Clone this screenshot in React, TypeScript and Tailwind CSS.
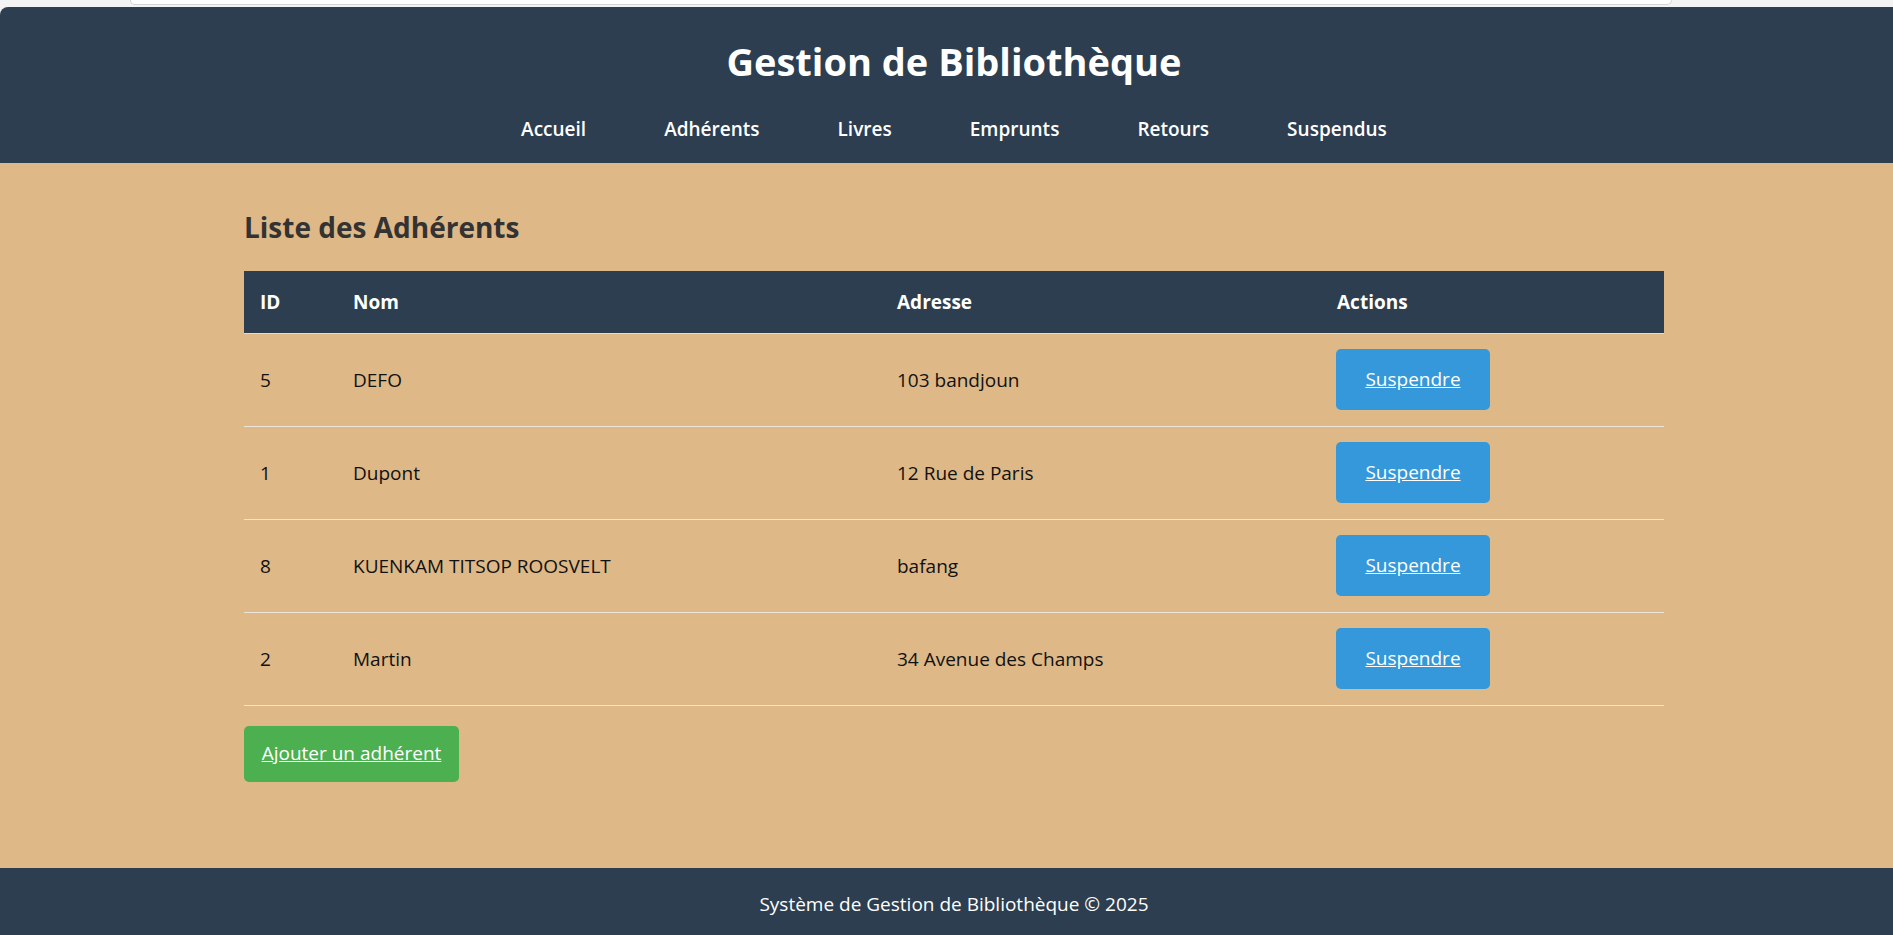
import React from "react";

const adherents = [
  { id: 5, nom: "DEFO", adresse: "103 bandjoun" },
  { id: 1, nom: "Dupont", adresse: "12 Rue de Paris" },
  { id: 8, nom: "KUENKAM TITSOP ROOSVELT", adresse: "bafang" },
  { id: 2, nom: "Martin", adresse: "34 Avenue des Champs" },
];

const navigation = ["Accueil", "Adhérents", "Livres", "Emprunts", "Retours", "Suspendus"];

export default function App() {
  return (
    <div className="min-h-[935px] flex flex-col bg-[#f3f3f3] font-['Open_Sans',sans-serif]">
      <div className="h-[7px] flex pl-[130px]">
        <div className="w-[1542px] h-[5px] bg-white border-b border-x border-[#d4d4d4] rounded-b-[6px]" />
      </div>

      <header className="bg-[#2c3e50] rounded-tl-[8px] text-white pl-[15px] pt-[30px] pb-[20px]">
        <h1 className="text-center text-[38px] leading-[48px] font-bold">Gestion de Bibliothèque</h1>
        <nav className="mt-[30px] flex justify-center gap-[78px] text-[19px] leading-[28px] font-semibold">
          {navigation.map((item) => (
            <a key={item} href="#" className="text-white">
              {item}
            </a>
          ))}
        </nav>
      </header>

      <main className="flex-1 bg-[#deb887] pt-[46px] pb-[86px] pl-[244px]">
        <h2 className="text-[28px] leading-[36px] font-bold text-[#333333]">Liste des Adhérents</h2>
        <table className="mt-[26px] w-[1420px] border-collapse text-[19px] text-[#111111] table-fixed">
          <colgroup>
            <col className="w-[93px]" />
            <col className="w-[544px]" />
            <col className="w-[440px]" />
            <col className="w-[343px]" />
          </colgroup>
          <thead>
            <tr className="bg-[#2c3e50] text-white h-[62px] border-b border-[#dddddd]">
              <th className="text-left font-bold pl-[16px]">ID</th>
              <th className="text-left font-bold pl-[16px]">Nom</th>
              <th className="text-left font-bold pl-[16px]">Adresse</th>
              <th className="text-left font-bold pl-[16px]">Actions</th>
            </tr>
          </thead>
          <tbody>
            {adherents.map((a) => (
              <tr key={a.id} className="h-[93px] border-b border-[#ece4d8]">
                <td className="pl-[16px] pt-[2px]">{a.id}</td>
                <td className="pl-[16px] pt-[2px]">{a.nom}</td>
                <td className="pl-[16px] pt-[2px]">{a.adresse}</td>
                <td className="pl-[15px]">
                  <a
                    href="#"
                    className="inline-flex items-center justify-center w-[154px] h-[61px] bg-[#3498db] text-white underline rounded-[5px]"
                  >
                    Suspendre
                  </a>
                </td>
              </tr>
            ))}
          </tbody>
        </table>
        <a
          href="#"
          className="mt-[20px] inline-flex items-center justify-center w-[215px] h-[56px] bg-[#4caf50] text-white underline rounded-[5px] text-[19px]"
        >
          Ajouter un adhérent
        </a>
      </main>

      <footer className="h-[68px] bg-[#2c3e50] text-white flex items-center justify-center pl-[15px] pt-[5px] text-[19px]">
        Système de Gestion de Bibliothèque © 2025
      </footer>
    </div>
  );
}
